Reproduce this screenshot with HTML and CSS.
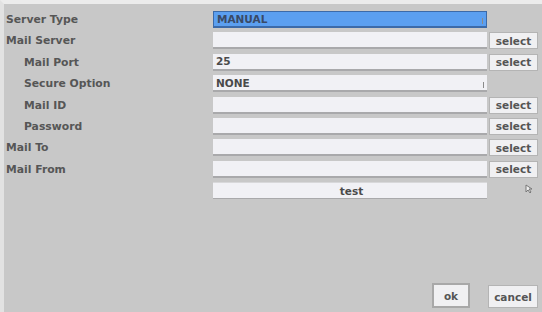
FILE: index.html
```html
<!DOCTYPE html>
<html>
<head>
<meta charset="utf-8">
<link rel="stylesheet" href="styles.css">
</head>
<body>
<div class="screen">
  <div class="form">
    <div class="label">Server Type</div>
    <div class="field blue">MANUAL<span class="arrow"></span></div>
    <div></div>

    <div class="label">Mail Server</div>
    <div class="field"></div>
    <div class="btn">select</div>

    <div class="label sub">Mail Port</div>
    <div class="field">25</div>
    <div class="btn">select</div>

    <div class="label sub">Secure Option</div>
    <div class="field">NONE<span class="arrow"></span></div>
    <div></div>

    <div class="label sub">Mail ID</div>
    <div class="field"></div>
    <div class="btn">select</div>

    <div class="label sub">Password</div>
    <div class="field"></div>
    <div class="btn">select</div>

    <div class="label">Mail To</div>
    <div class="field"></div>
    <div class="btn">select</div>

    <div class="label">Mail From</div>
    <div class="field"></div>
    <div class="btn">select</div>

    <div></div>
    <div class="field test">test</div>
    <div class="cursor-cell">
      <svg class="cursor" width="10" height="10" viewBox="0 0 10 10">
        <path d="M1 1 L1 8 L3 6 L5 9 L6 8 L4 5 L7 5 Z" fill="#eee" stroke="#777" stroke-width="1"/>
      </svg>
    </div>
  </div>
  <div class="actions">
    <div class="abtn ok">ok</div>
    <div class="abtn cancel">cancel</div>
  </div>
</div>
</body>
</html>
```
FILE: styles.css
```css
html, body {
  margin: 0;
  padding: 0;
  background: #c8c8c8;
}
.screen {
  width: 538px;
  height: 308px;
  border-top: 4px solid #ececec;
  border-left: 4px solid #e2e2e2;
  background: #c8c8c8;
  display: flex;
  flex-direction: column;
  font-family: "DejaVu Sans", Verdana, sans-serif;
  font-weight: bold;
  font-size: 10px;
  color: #555;
}
.form {
  display: grid;
  grid-template-columns: 207px 274px 49px;
  column-gap: 2px;
  row-gap: 4.4px;
  grid-auto-rows: 17px;
  padding-top: 7px;
}
.label {
  display: flex;
  align-items: center;
  padding-left: 2px;
  color: #565656;
  font-size: 10.8px;
}
.label.sub {
  padding-left: 20px;
}
.field {
  position: relative;
  background: #f1f1f5;
  border-bottom: 2px solid #a9a9ab;
  box-sizing: border-box;
  display: flex;
  align-items: center;
  padding-left: 3px;
  color: #4a4a4a;
  font-size: 10.5px;
}
.field.blue {
  background: #5b9ff0;
  border: 1px solid #3c6aa8;
  border-bottom: 2px solid #3c6aa8;
  color: #3a4a66;
}
.field.test {
  justify-content: center;
  border-bottom: 1px solid #a9a9ab;
  border-top: 1px solid #d8d8da;
}
.arrow {
  position: absolute;
  right: 3px;
  bottom: 2px;
  width: 3px;
  height: 6px;
  border-right: 1px solid #8a8a8a;
}
.btn {
  background: #f0f0f2;
  border: 1px solid #b4b4b4;
  box-sizing: border-box;
  display: flex;
  align-items: center;
  justify-content: center;
  font-size: 10.5px;
  color: #555;
}
.cursor-cell {
  position: relative;
}
.cursor {
  position: absolute;
  left: 36px;
  top: 2px;
}
.actions {
  margin-top: auto;
  display: flex;
  justify-content: flex-end;
  gap: 18px;
  padding-right: 4px;
  padding-bottom: 4px;
  align-items: flex-end;
}
.abtn {
  background: #f0f0f2;
  box-sizing: border-box;
  display: flex;
  align-items: center;
  justify-content: center;
  font-size: 10.5px;
  color: #555;
}
.abtn.ok {
  width: 38px;
  height: 25px;
  border: 2px solid #a8a8a8;
}
.abtn.cancel {
  width: 50px;
  height: 23px;
  border: 1px solid #b4b4b4;
}
```
